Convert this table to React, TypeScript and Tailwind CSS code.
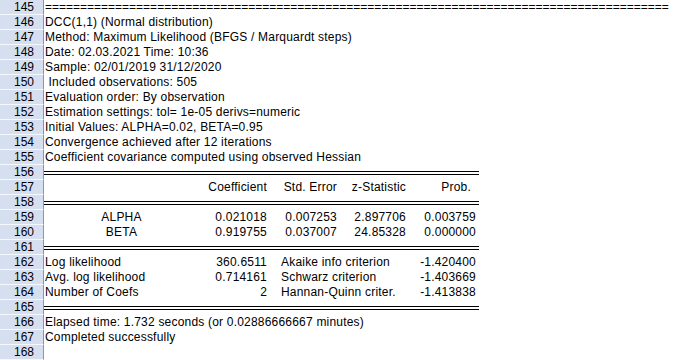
import React from "react";

type Cell = { text: string; align?: "left" | "right" | "center"; cls?: string };

const header = (n: number) => (
  <div className="w-[44px] shrink-0 h-[15px] bg-[#d6dff0] border-r border-r-[#8c94a6] border-b border-b-[#f4f7fc] text-right pr-[9px] leading-[14px] text-black">
    {n}
  </div>
);

const TextRow = ({ n, text, cls = "tracking-[0.2px]" }: { n: number; text: string; cls?: string }) => (
  <div className="flex h-[15px]">
    {header(n)}
    <div className={`flex-1 whitespace-pre overflow-hidden pl-[1px] leading-[15px] ${cls}`}>{text}</div>
  </div>
);

const DoubleRow = ({ n }: { n: number }) => (
  <div className="flex h-[15px]">
    {header(n)}
    <div className="w-[435px]">
      <div className="mt-[6px] h-[4px] border-y border-black" />
    </div>
  </div>
);

const TableRow = ({ n, cells }: { n: number; cells: Cell[] }) => (
  <div className="flex h-[15px]">
    {header(n)}
    <div className="grid grid-cols-[155px_71px_70px_69px_70px] leading-[15px] whitespace-pre tracking-[0.2px]">
      {cells.map((c, i) => (
        <div
          key={i}
          className={`${c.align === "right" ? "text-right pr-[3px]" : c.align === "center" ? "text-center" : "text-left pl-[1px]"} ${c.cls ?? ""}`}
        >
          {c.text}
        </div>
      ))}
    </div>
  </div>
);

const r = (text: string, cls?: string): Cell => ({ text, align: "right", cls });
const l = (text: string, cls?: string): Cell => ({ text, align: "left", cls });
const c = (text: string): Cell => ({ text, align: "center" });

export default function App() {
  return (
    <div className="w-[675px] h-[360px] overflow-hidden bg-white text-black text-[12px] font-['Liberation_Sans',Arial,sans-serif]">
      <TextRow n={145} text={"=".repeat(89)} cls="" />
      <TextRow n={146} text="DCC(1,1) (Normal distribution)" />
      <TextRow n={147} text="Method: Maximum Likelihood (BFGS / Marquardt steps)" />
      <TextRow n={148} text="Date: 02.03.2021 Time: 10:36" />
      <TextRow n={149} text="Sample: 02/01/2019 31/12/2020" />
      <TextRow n={150} text=" Included observations: 505" />
      <TextRow n={151} text="Evaluation order: By observation" />
      <TextRow n={152} text="Estimation settings: tol= 1e-05 derivs=numeric" />
      <TextRow n={153} text="Initial Values: ALPHA=0.02, BETA=0.95" />
      <TextRow n={154} text="Convergence achieved after 12 iterations" />
      <TextRow n={155} text="Coefficient covariance computed using observed Hessian" />
      <DoubleRow n={156} />
      <TableRow
        n={157}
        cells={[l(""), r("Coefficient"), r("Std. Error"), r("z-Statistic"), r("Prob.", "pr-[8px]")]}
      />
      <DoubleRow n={158} />
      <TableRow n={159} cells={[c("ALPHA"), r("0.021018"), r("0.007253"), r("2.897706"), r("0.003759")]} />
      <TableRow n={160} cells={[c("BETA"), r("0.919755"), r("0.037007"), r("24.85328"), r("0.000000")]} />
      <DoubleRow n={161} />
      <TableRow
        n={162}
        cells={[l("Log likelihood"), r("360.6511"), { text: "Akaike info criterion", cls: "col-span-2 pl-[11px]" }, r("-1.420400")]}
      />
      <TableRow
        n={163}
        cells={[l("Avg. log likelihood"), r("0.714161"), { text: "Schwarz criterion", cls: "col-span-2 pl-[11px]" }, r("-1.403669")]}
      />
      <TableRow
        n={164}
        cells={[l("Number of Coefs"), r("2"), { text: "Hannan-Quinn criter.", cls: "col-span-2 pl-[11px]" }, r("-1.413838")]}
      />
      <DoubleRow n={165} />
      <TextRow n={166} text="Elapsed time: 1.732 seconds (or 0.02886666667 minutes)" />
      <TextRow n={167} text="Completed successfully" />
      <TextRow n={168} text="" />
    </div>
  );
}
